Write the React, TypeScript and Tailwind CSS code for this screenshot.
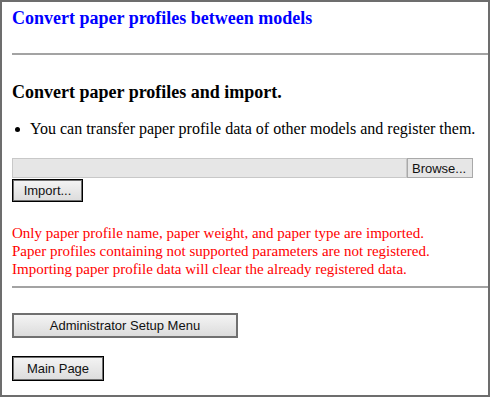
const serif = "font-['Liberation_Serif','Times_New_Roman',serif]";
const sans = "font-['Liberation_Sans',Arial,sans-serif]";

const btn =
  "bg-gradient-to-b from-[#f4f4f4] to-[#dcdcdc] text-[13px] leading-none text-[#111]";

export default function App() {
  return (
    <div className={`h-[397px] w-[490px] border-2 border-[#6d6d6d] bg-white ${serif}`}>
      <div className="pl-[10px]">
        <h1 className="pt-[6px] text-[18px] font-bold leading-[20px] text-[#0000ff]">
          Convert paper profiles between models
        </h1>
        <hr className="mt-[25px] border-0 border-t-2 border-[#a3a3a3]" />

        <h2 className="mt-[27px] text-[18px] font-bold leading-[20px] text-black">
          Convert paper profiles and import.
        </h2>

        <ul className="mt-[18px] text-[16px] leading-[18px] text-black">
          <li className="flex items-center">
            <span className="mx-[3px] inline-block h-[5px] w-[5px] rounded-full bg-black" />
            <span className="ml-[7px]">
              You can transfer paper profile data of other models and register them.
            </span>
          </li>
        </ul>

        <div className={`mt-[20px] flex h-[20px] w-[461px] ${sans}`}>
          <div className="flex-1 border border-[#c8c8c8] bg-[#e6e6e6]" />
          <button
            type="button"
            className="h-[20px] w-[66px] border border-[#a9a9a9] bg-[#e6e6e6] px-[4px] text-left text-[13px] leading-none text-[#111]"
          >
            Browse...
          </button>
        </div>
        <button
          type="button"
          className={`mt-[1px] block h-[23px] w-[71px] border border-black shadow-[inset_0_0_0_1px_#707070] ${btn} ${sans}`}
        >
          Import...
        </button>

        <div className="mt-[22px] text-[15px] leading-[18px] text-[#ff0000]">
          <p>Only paper profile name, paper weight, and paper type are imported.</p>
          <p>Paper profiles containing not supported parameters are not registered.</p>
          <p>Importing paper profile data will clear the already registered data.</p>
        </div>
        <hr className="mt-[8px] border-0 border-t-2 border-[#a3a3a3]" />

        <button
          type="button"
          className={`mt-[25px] block h-[25px] w-[226px] border-2 border-[#707070] ${btn} ${sans}`}
        >
          Administrator Setup Menu
        </button>
        <button
          type="button"
          className={`mt-[18px] block h-[25px] w-[92px] border border-black shadow-[inset_0_0_0_1px_#707070] ${btn} ${sans}`}
        >
          Main Page
        </button>
      </div>
    </div>
  );
}
